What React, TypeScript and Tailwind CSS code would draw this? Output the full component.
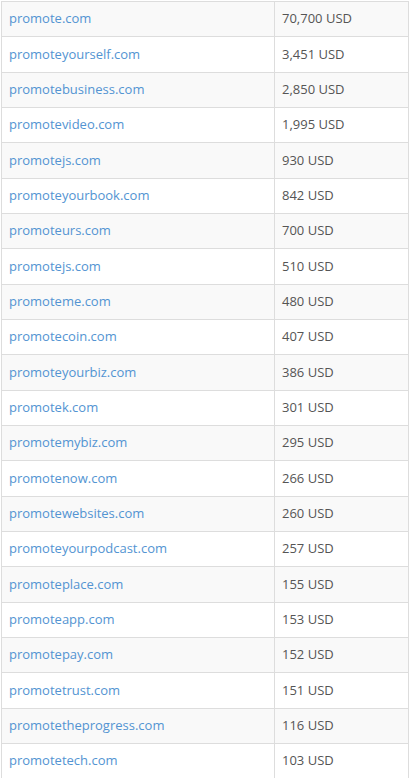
import React from "react";

const rows: [string, string][] = [
  ["promote.com", "70,700 USD"],
  ["promoteyourself.com", "3,451 USD"],
  ["promotebusiness.com", "2,850 USD"],
  ["promotevideo.com", "1,995 USD"],
  ["promotejs.com", "930 USD"],
  ["promoteyourbook.com", "842 USD"],
  ["promoteurs.com", "700 USD"],
  ["promotejs.com", "510 USD"],
  ["promoteme.com", "480 USD"],
  ["promotecoin.com", "407 USD"],
  ["promoteyourbiz.com", "386 USD"],
  ["promotek.com", "301 USD"],
  ["promotemybiz.com", "295 USD"],
  ["promotenow.com", "266 USD"],
  ["promotewebsites.com", "260 USD"],
  ["promoteyourpodcast.com", "257 USD"],
  ["promoteplace.com", "155 USD"],
  ["promoteapp.com", "153 USD"],
  ["promotepay.com", "152 USD"],
  ["promotetrust.com", "151 USD"],
  ["promotetheprogress.com", "116 USD"],
  ["promotetech.com", "103 USD"],
];

export default function App() {
  return (
    <div
      className="w-[410px] h-[778px] overflow-hidden bg-white pt-px pl-px"
      style={{ fontFamily: '"Open Sans", sans-serif' }}
    >
      <div className="w-[408px] border-t border-l border-[#dddddd]">
        {rows.map(([d, p], i) => (
          <div
            key={i}
            className={`flex h-[35.33px] border-b border-r border-[#dddddd] text-[13px] ${
              i % 2 === 0 ? "bg-[#f9f9f9]" : "bg-white"
            }`}
          >
            <div className="w-[273px] border-r border-[#dddddd] flex items-center pl-[7px] text-[#5394d2]">
              {d}
            </div>
            <div className="flex-1 flex items-center pl-[7px] text-[#555555]">{p}</div>
          </div>
        ))}
      </div>
    </div>
  );
}
